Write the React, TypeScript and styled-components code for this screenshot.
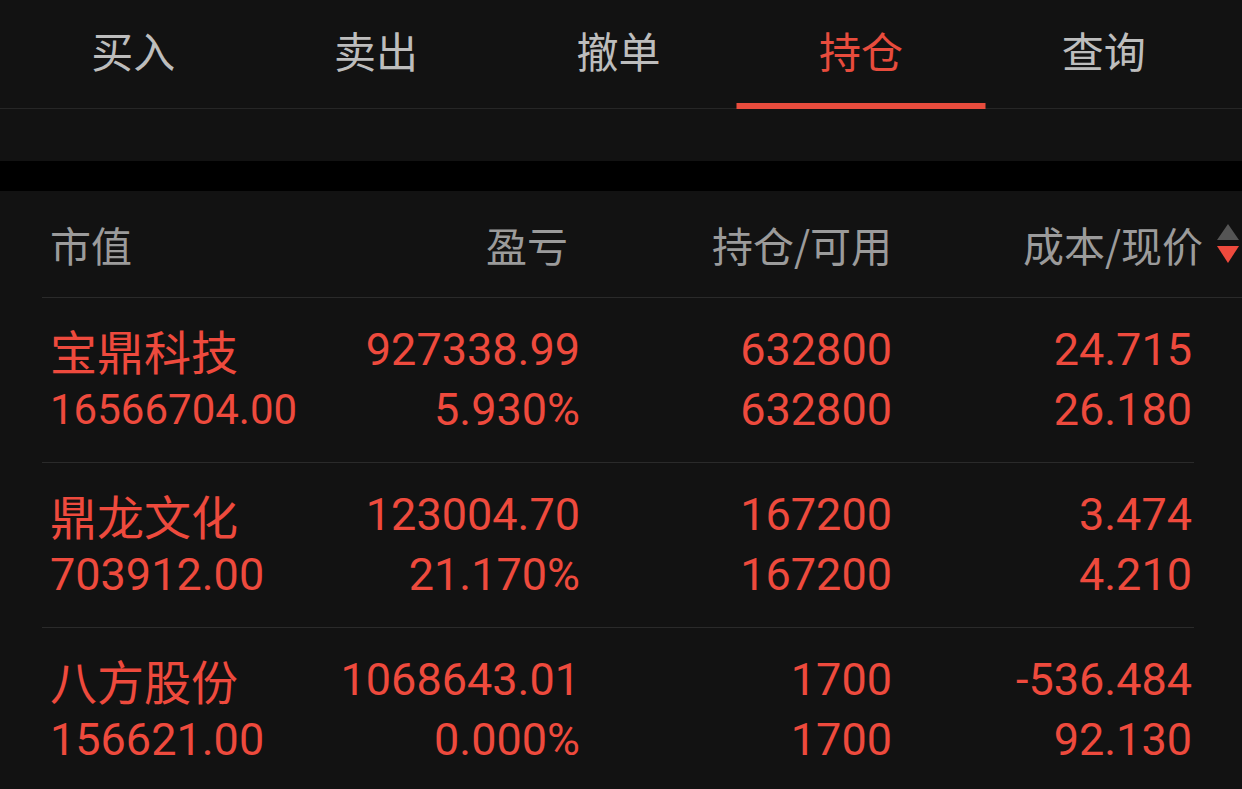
import styled, { createGlobalStyle } from 'styled-components';

const GlobalStyle = createGlobalStyle`
  html, body {
    margin: 0;
    padding: 0;
    background: #121212;
  }
  body {
    font-family: Roboto, "Noto Sans CJK SC", sans-serif;
  }
`;

const cjk = `"Noto Sans CJK SC", "Noto Sans", sans-serif`;
const num = `Roboto, "Noto Sans CJK SC", sans-serif`;

const red = '#ee4a3d';

// 页面
const Page = styled.div`
  width: 1242px;
  height: 789px;
  overflow: hidden;
  background: #121212;
`;

// 顶部标签栏
const TabBar = styled.div`
  display: flex;
  height: 108px;
  padding: 0 17px 0 12px;
  border-bottom: 1px solid #262626;
`;

const Tab = styled.div<{ $active?: boolean }>`
  position: relative;
  flex: 1;
  display: flex;
  align-items: center;
  justify-content: center;
  padding-bottom: 10px;
  font-family: ${cjk};
  font-size: 42px;
  color: ${(p) => (p.$active ? '#e84c3d' : '#bdbdbd')};

  &::after {
    content: '';
    display: ${(p) => (p.$active ? 'block' : 'none')};
    position: absolute;
    left: 50%;
    bottom: -1px;
    width: 249px;
    height: 6px;
    transform: translateX(-50%);
    background: #e84c3d;
  }
`;

const Spacer = styled.div`
  height: 52px;
`;

const Band = styled.div`
  height: 30px;
  background: #000;
`;

// 持仓列表
const List = styled.div`
  margin-left: 42px;
  width: 1152px;
`;

const HeaderRow = styled.div`
  display: grid;
  grid-template-columns: 260px 258px 324px 1fr;
  align-items: center;
  height: 106px;
  padding: 0 0 0 8px;
  margin-right: -48px;
  border-bottom: 1px solid #2a2a2a;
  font-family: ${cjk};
  font-size: 41px;
  color: #9b9b9b;
`;

const HeadCell = styled.div<{ $align?: 'left' | 'right'; $pr?: number }>`
  display: flex;
  align-items: center;
  justify-content: ${(p) => (p.$align === 'right' ? 'flex-end' : 'flex-start')};
  padding-right: ${(p) => p.$pr ?? 0}px;
  gap: 14px;
`;

const SortIcon = styled.svg`
  width: 22px;
  height: 40px;
  flex-shrink: 0;
`;

const Row = styled.div`
  display: grid;
  grid-template-columns: 260px 270px 312px 1fr;
  grid-auto-rows: 60px;
  padding: 21px 2px 23px 8px;
  border-bottom: 1px solid #2a2a2a;
  color: ${red};
`;

const Cell = styled.div<{ $align?: 'left' | 'right'; $name?: boolean; $size?: number }>`
  display: flex;
  align-items: center;
  justify-content: ${(p) => (p.$align === 'right' ? 'flex-end' : 'flex-start')};
  font-family: ${(p) => (p.$name ? cjk : num)};
  font-size: ${(p) => (p.$size ?? (p.$name ? 47 : 45))}px;
  white-space: nowrap;
`;

type Position = {
  name: string;
  value: string;
  valueSize?: number;
  profit: string;
  ratio: string;
  hold: string;
  usable: string;
  cost: string;
  price: string;
};

const positions: Position[] = [
  {
    name: '宝鼎科技',
    value: '16566704.00',
    valueSize: 42,
    profit: '927338.99',
    ratio: '5.930%',
    hold: '632800',
    usable: '632800',
    cost: '24.715',
    price: '26.180',
  },
  {
    name: '鼎龙文化',
    value: '703912.00',
    profit: '123004.70',
    ratio: '21.170%',
    hold: '167200',
    usable: '167200',
    cost: '3.474',
    price: '4.210',
  },
  {
    name: '八方股份',
    value: '156621.00',
    profit: '1068643.01',
    ratio: '0.000%',
    hold: '1700',
    usable: '1700',
    cost: '-536.484',
    price: '92.130',
  },
];

const tabs = ['买入', '卖出', '撤单', '持仓', '查询'];

export default function App() {
  return (
    <Page>
      <GlobalStyle />
      <TabBar>
        {tabs.map((t) => (
          <Tab key={t} $active={t === '持仓'}>
            {t}
          </Tab>
        ))}
      </TabBar>
      <Spacer />
      <Band />
      <List>
        <HeaderRow>
          <HeadCell>市值</HeadCell>
          <HeadCell $align="right">盈亏</HeadCell>
          <HeadCell $align="right">持仓/可用</HeadCell>
          <HeadCell $align="right" $pr={3}>
            成本/现价
            <SortIcon viewBox="0 0 22 40">
              <path d="M11 0 L22 16 L0 16 Z" fill="#555" />
              <path d="M0 22 L22 22 L11 39 Z" fill={red} />
            </SortIcon>
          </HeadCell>
        </HeaderRow>
        {positions.map((p) => (
          <Row key={p.name}>
            <Cell $name>{p.name}</Cell>
            <Cell $align="right">{p.profit}</Cell>
            <Cell $align="right">{p.hold}</Cell>
            <Cell $align="right">{p.cost}</Cell>
            <Cell $size={p.valueSize}>{p.value}</Cell>
            <Cell $align="right">{p.ratio}</Cell>
            <Cell $align="right">{p.usable}</Cell>
            <Cell $align="right">{p.price}</Cell>
          </Row>
        ))}
      </List>
    </Page>
  );
}
